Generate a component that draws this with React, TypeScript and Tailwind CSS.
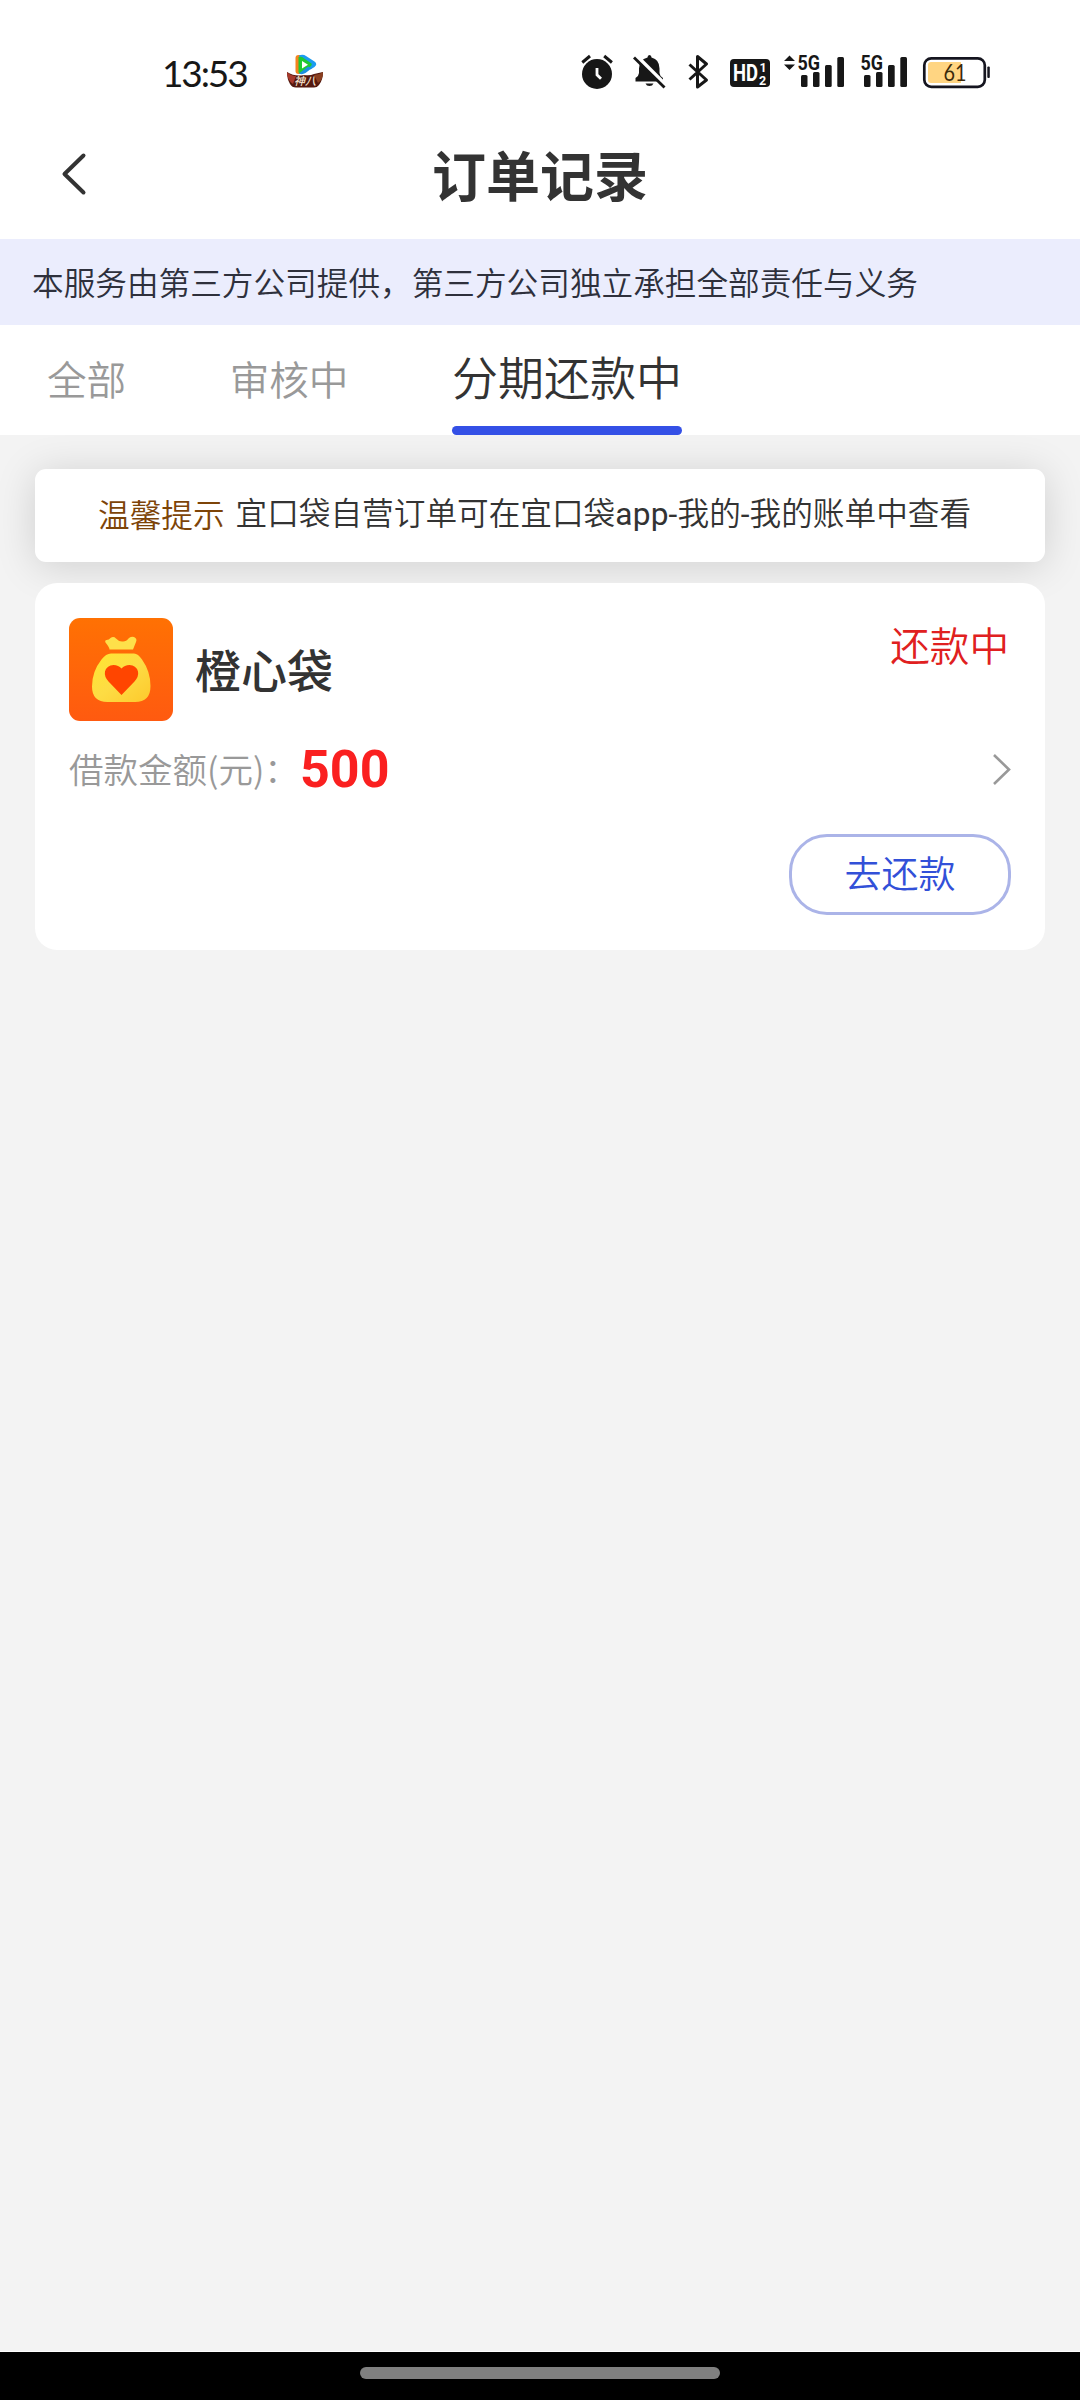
import React, { FC, useState } from 'react';
import clsx from 'clsx';

interface IOrder {
  id: number;
  name: string;
  status: string;
  amount: number;
}

const tabs = [
  { key: 'all', title: '全部' },
  { key: 'review', title: '审核中' },
  { key: 'repay', title: '分期还款中' },
];

const orders: IOrder[] = [{ id: 1, name: '橙心袋', status: '还款中', amount: 500 }];

const AppBadge: FC = () => (
  <svg className="ml-[41px] h-[34px] w-[38px]" viewBox="286 57 38 34">
    <path d="M295.500 61q0-3 3-3h3v19h-3q-3 0-3-3z" fill="#f5841f" />
    <path d="M299 58.500q4-1.500 7 .5l8.500 5.500q3.500 2.500 0 5.500l-4 2.500-10.500-9z" fill="#1c9cf0" />
    <path d="M298.500 60q3-1 5 1l8 5.500q1 1.500-1 3l-8.500 6.500q-3 1.500-3.500-1z" fill="#1fc932" />
    <path d="M312 71l-6.500 5q-3.500 2-6.500.5l9-7z" fill="#1a8fe0" />
    <path d="M302 64v7.500l6-3.700z" fill="#fff" />
    <path d="M287 75q8 5 17 3 6 1 10-1l9-2q0 8-4 13-2 2.500-5 2.500h-18q-4 0-6-3.500-3-5-3-12z" fill="#54190f" />
    <path d="M287 75q4 4 9 4l-3 8q-6-4-6-12z" fill="#a8392b" />
    <path d="M323 75q-4 3-9 3l4 8q5-3 5-11z" fill="#8a3f20" />
    <text x="294" y="87.500" fontSize="11" fontWeight="500" fontStyle="italic" fill="#f6e3cf" fontFamily="Noto Sans CJK SC, sans-serif">
      神八
    </text>
  </svg>
);

const AlarmIcon: FC = () => (
  <svg className="h-[36px] w-[34px]" viewBox="580 54 34 36" fill="none">
    <circle cx="597" cy="74" r="15" fill="#171717" />
    <path d="M582.300 62.500l7.700-6.500M604.200 56l7.700 6.500" stroke="#171717" strokeWidth="3" />
    <path d="M597 68v6.800l4 4" stroke="#fff" strokeWidth="2.800" />
  </svg>
);

const BellOffIcon: FC = () => (
  <svg className="ml-[18px] h-[36px] w-[36px]" viewBox="632 54 36 36">
    <path d="M647.500 57.500q0-2.500 2-2.500t2 2.500q8 2 8 11v4.500q0 2.500 3.500 5v3.500h-27.500v-3.500q3.500-2.500 3.500-5v-4.500q0-9 8.500-11z" fill="#171717" />
    <path d="M645.500 83.500h8q-1 2.500-4 2.500t-4-2.500z" fill="#171717" />
    <path d="M636 55.500l30 30" stroke="#fff" strokeWidth="4" />
    <path d="M634 57.500l30.500 30" stroke="#171717" strokeWidth="2.800" />
  </svg>
);

const BluetoothIcon: FC = () => (
  <svg className="ml-[18px] h-[36px] w-[24px]" viewBox="686 54 24 36" fill="none">
    <path d="M689.500 64.500l17 15.500-9 7v-30.500l9 7.500-17 15.500" stroke="#171717" strokeWidth="3" strokeLinejoin="round" />
  </svg>
);

const HdIcon: FC = () => (
  <svg className="ml-[20px] h-[36px] w-[40px]" viewBox="730 54 40 36">
    <rect x="730" y="59" width="40" height="28" rx="4" fill="#171717" />
    <g fill="#fff" fontFamily="Roboto, sans-serif" fontWeight="700">
      <text x="733" y="81" fontSize="23" textLength="25" lengthAdjust="spacingAndGlyphs">
        HD
      </text>
      <text x="759.500" y="71.500" fontSize="12.500">
        1
      </text>
      <text x="759" y="84.500" fontSize="12.500">
        2
      </text>
    </g>
  </svg>
);

const SignalIcon: FC<{ arrows?: boolean }> = ({ arrows }) => (
  <svg className={clsx('h-[44px] -mt-[8px]', arrows ? 'ml-[14px] w-[61px]' : 'ml-[15px] w-[47px]')} viewBox={arrows ? '784 46 61 44' : '797 46 47 44'} fill="#171717">
    {arrows && <path d="M784 61l5.500-5.500 5.500 5.500zM784 64.500h11l-5.500 5.500z" />}
    <text x="797.500" y="70" fontSize="20" fontWeight="700" fontFamily="Roboto, sans-serif" textLength="22.500" lengthAdjust="spacingAndGlyphs">
      5G
    </text>
    <rect x="801" y="75" width="6.500" height="12" rx="1.500" />
    <rect x="813" y="72" width="6.500" height="15" rx="1.500" />
    <rect x="825" y="65" width="6.700" height="22" rx="1.500" />
    <rect x="837.300" y="57" width="6.700" height="30" rx="1.500" />
  </svg>
);

const BatteryIcon: FC = () => (
  <svg className="ml-[15px] h-[36px] w-[68px]" viewBox="922 54 68 36">
    <rect x="924.300" y="58.300" width="60.500" height="28.500" rx="7" fill="#fff" stroke="#15151f" strokeWidth="2.700" />
    <path d="M961 62v21h-30q-3 0-3-3v-15q0-3 3-3z" fill="#ffd582" />
    <rect x="987.300" y="66.500" width="2.500" height="11.500" rx="1" fill="#15151f" />
    <text x="943.500" y="81" fontSize="23.500" fill="#3b2a0c" fontFamily="Lato, sans-serif" textLength="23" lengthAdjust="spacingAndGlyphs">
      61
    </text>
  </svg>
);

const BagLogo: FC = () => (
  <svg className="h-[103px] w-[104px]" viewBox="0 0 104 103">
    <defs>
      <linearGradient id="logoBg" x1="0" y1="0" x2="0" y2="1">
        <stop offset="0" stopColor="#ff7103" />
        <stop offset="1" stopColor="#ff5a10" />
      </linearGradient>
      <linearGradient id="logoBag" x1="0" y1="0" x2="1" y2="1">
        <stop offset="0" stopColor="#ffe630" />
        <stop offset="0.5" stopColor="#fddc44" />
        <stop offset="1" stopColor="#fdc92c" />
      </linearGradient>
    </defs>
    <rect width="104" height="103" rx="11" fill="url(#logoBg)" />
    <path d="M36.500 24.500q-1-2 1-2.500 2.500 0 4-2 3-2 5.500.500 3 3.500 7 3 3.500 0 5.500-3 2-2.500 5.500-1.500 3.500 1.500 2 5l-3 7.500h-23.500q0-2-4-7z" fill="#fee04a" />
    <path d="M42 35.500h23q4 0 8 6 8.500 12 8.500 26.500 0 16-15.500 16h-27.500q-15.500 0-15.500-15.500 0-15 9.500-27 4.500-6 9.500-6z" fill="url(#logoBag)" />
    <path d="M52.500 77l-13-13.500q-4.500-5-3.500-10 2-6.500 8.500-6.500 5 0 8 3.500 3-3.500 8-3.500 6.500 0 8.500 6.500 1 5-3.500 10z" fill="#ff4500" />
  </svg>
);

const StatusBar: FC = () => (
  <div className="flex h-[108px] items-start pt-[54px] pl-[162px]">
    <span className="w-[83px] font-[Lato] text-[37px] leading-[38px] tracking-[-2.100px] whitespace-nowrap text-[#171717]">13:53</span>
    <AppBadge />
    <div className="ml-auto flex pr-[90px]">
      <AlarmIcon />
      <BellOffIcon />
      <BluetoothIcon />
      <HdIcon />
      <SignalIcon arrows />
      <SignalIcon />
      <BatteryIcon />
    </div>
  </div>
);

const OrderCard: FC<{ order: IOrder }> = ({ order }) => (
  <div className="relative mt-[21px] h-[367px] rounded-[22px] bg-white px-[34px] pt-[35px]">
    <div className="flex items-start justify-between">
      <div className="flex items-center">
        <BagLogo />
        <p className="ml-[22px] pb-[4px] text-[46px] leading-[60px] font-medium text-[#333]">{order.name}</p>
      </div>
      <p className="pr-[2px] text-[39.600px] leading-[52px] font-[350] text-[#e02020]">{order.status}</p>
    </div>
    <div className="mt-[18px] flex h-[60px] items-center">
      <span className="w-[231px] text-[34.500px] font-[350] whitespace-nowrap text-[#999]">借款金额(元)：</span>
      <span className="pt-[2px] font-[Roboto] text-[52px] font-bold text-[#fa2020]">{order.amount}</span>
      <svg className="ml-auto h-[32px] w-[20px]" viewBox="0 0 20 32" fill="none">
        <path d="M3 2l15 14.500-15 14.500" stroke="#999" strokeWidth="2.600" />
      </svg>
    </div>
    <div className="mt-[35px] flex justify-end">
      <button className="h-[81px] w-[222px] rounded-[38px] border-[3px] border-[#abb4e8] pb-[4px] text-[37px] font-[350] text-[#3250d8]">去还款</button>
    </div>
  </div>
);

const App: FC = () => {
  const [active, setActive] = useState('repay');

  return (
    <div className="flex h-[2400px] w-[1080px] flex-col bg-[#f3f3f3] font-['Noto_Sans_CJK_SC',sans-serif]">
      <header className="h-[239px] bg-white">
        <StatusBar />
        <div className="flex h-[131px] items-center pl-[60px]">
          <svg className="h-[44px] w-[28px]" viewBox="0 0 28 44" fill="none">
            <path d="M23.500 3.500l-19 18.500 19 18.500" stroke="#333" strokeWidth="4" strokeLinecap="round" strokeLinejoin="round" />
          </svg>
          <h1 className="mr-[88px] flex-1 text-center text-[54px] font-bold text-[#333]">订单记录</h1>
        </div>
      </header>

      <div className="flex h-[86px] items-center bg-[#ebedfd] pl-[32px] text-[31.650px] font-[350] whitespace-nowrap text-[#2e303c]">
        本服务由第三方公司提供，第三方公司独立承担全部责任与义务
      </div>

      <nav className="flex h-[110px] gap-[103.500px] bg-white pl-[47px]">
        {tabs.map((tab) => (
          <button
            key={tab.key}
            onClick={() => setActive(tab.key)}
            className={clsx(
              'flex flex-col justify-between font-[350] whitespace-nowrap',
              active === tab.key ? 'pt-[16px] text-[46px] text-[#333]' : 'pt-[19px] text-[39.600px] text-[#999]'
            )}
          >
            <span className="leading-[68px]">{tab.title}</span>
            {active === tab.key && <span className="h-[9px] w-full rounded-full bg-[#3450e6]" />}
          </button>
        ))}
      </nav>

      <main className="flex-1 overflow-hidden px-[35px] pt-[34px]">
        <div className="flex h-[93px] items-center rounded-[11px] bg-white pb-[4px] pl-[63px] text-[31.650px] font-[350] whitespace-nowrap text-[#333] shadow-[0_4px_40px_rgba(0,0,0,0.15)]">
          <span className="mr-[11px] text-[#7d4408]">温馨提示</span>
          <span>
            宜口袋自营订单可在宜口袋<span className="font-[Roboto] font-normal tracking-[0.200px]">app-</span>我的
            <span className="font-[Roboto] font-normal">-</span>我的账单中查看
          </span>
        </div>
        {orders.map((order) => (
          <OrderCard key={order.id} order={order} />
        ))}
      </main>

      <footer className="flex h-[49px] justify-center border-t border-white bg-black pt-[15px]">
        <div className="h-[12px] w-[360px] rounded-full bg-[#808080]" />
      </footer>
    </div>
  );
};

export default App;
